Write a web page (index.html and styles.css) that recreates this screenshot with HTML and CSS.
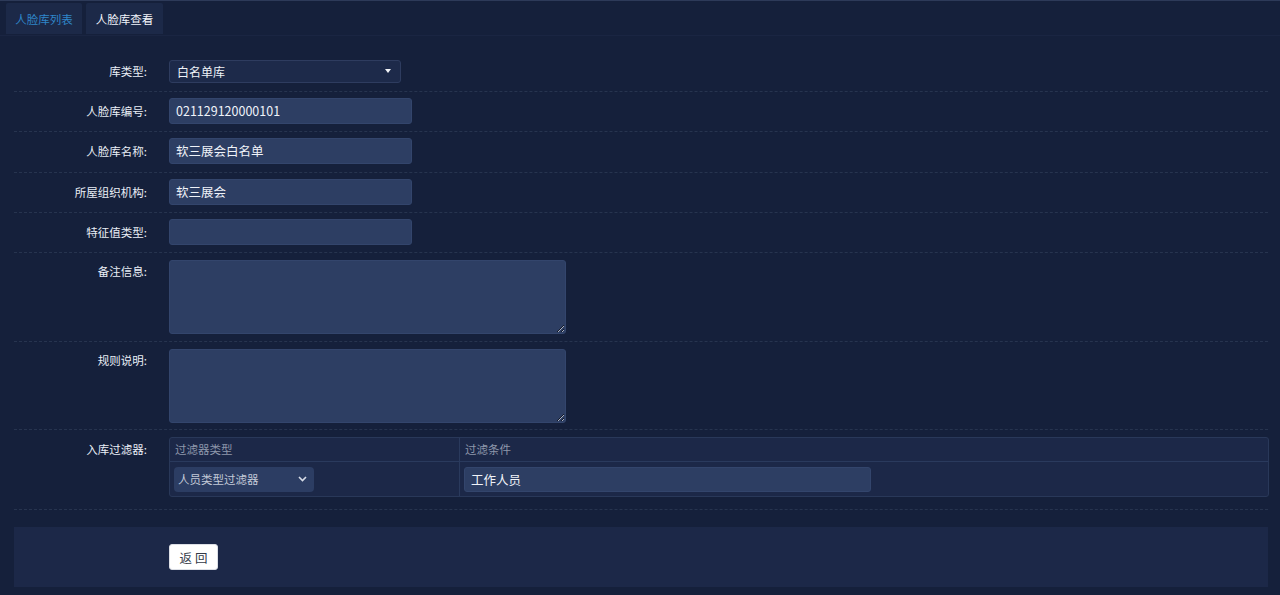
FILE: index.html
```html
<!DOCTYPE html>
<html lang="zh-CN">
<head>
<meta charset="utf-8">
<title>人脸库查看</title>
<link rel="stylesheet" href="styles.css">
</head>
<body>
<div class="page">
  <div class="tabs">
    <div class="tab tab-link">人脸库列表</div>
    <div class="tab tab-active">人脸库查看</div>
  </div>

  <div class="form">
    <div class="row row-first">
      <div class="label">库类型:</div>
      <div class="field">
        <div class="select-top">
          <span>白名单库</span>
          <span class="caret"></span>
        </div>
      </div>
    </div>

    <div class="row">
      <div class="label">人脸库编号:</div>
      <div class="field"><div class="input">021129120000101</div></div>
    </div>

    <div class="row">
      <div class="label">人脸库名称:</div>
      <div class="field"><div class="input">软三展会白名单</div></div>
    </div>

    <div class="row">
      <div class="label">所屋组织机构:</div>
      <div class="field"><div class="input">软三展会</div></div>
    </div>

    <div class="row">
      <div class="label">特征值类型:</div>
      <div class="field"><div class="input"></div></div>
    </div>

    <div class="row row-tall">
      <div class="label label-top">备注信息:</div>
      <div class="field"><textarea class="textarea" readonly></textarea></div>
    </div>

    <div class="row row-tall">
      <div class="label label-top">规则说明:</div>
      <div class="field"><textarea class="textarea" readonly></textarea></div>
    </div>

    <div class="row row-table">
      <div class="label label-table">入库过滤器:</div>
      <div class="field">
        <div class="filter-table">
          <div class="th th-type">过滤器类型</div>
          <div class="th th-cond">过滤条件</div>
          <div class="td td-type">
            <div class="mini-select">
              <span>人员类型过滤器</span>
              <svg class="chev" width="9" height="6" viewBox="0 0 9 6"><polyline points="1,1 4.5,4.5 8,1" fill="none" stroke="#d8dde8" stroke-width="1.6"/></svg>
            </div>
          </div>
          <div class="td td-cond">
            <div class="cond-input">工作人员</div>
          </div>
        </div>
      </div>
    </div>

    <div class="footer">
      <button class="btn">返 回</button>
    </div>
  </div>
</div>
</body>
</html>
```

FILE: styles.css
```css
* { box-sizing: border-box; }

html, body {
  margin: 0;
  padding: 0;
  background: #15203b;
}

body {
  font-family: "Noto Sans CJK SC", "Noto Sans", "Liberation Sans", sans-serif;
  color: #e3e8f2;
  font-size: 12px;
  width: 1280px;
  height: 595px;
  overflow: hidden;
}

.page {
  border-top: 1px solid #2d3a59;
  height: 595px;
}

.tabs {
  display: flex;
  gap: 4px;
  padding: 2px 0 0 6px;
  height: 35px;
  border-bottom: 1px solid #1a2542;
}

.tab {
  width: 77px;
  height: 31px;
  background: #1c2948;
  border-radius: 2px 2px 0 0;
  display: flex;
  align-items: center;
  justify-content: center;
  font-size: 11.5px;
}

.tab-link { color: #2f86c9; width: 76px; }
.tab-active { color: #f1f4fa; }

.form {
  margin: 13px 12px 0 14px;
}

.row {
  display: grid;
  grid-template-columns: 133px 1fr;
  column-gap: 22px;
  align-items: center;
  padding: 6px 0 7.25px;
  border-bottom: 1px dashed #27344f;
}

.row-first { padding: 9px 0 7px; }
.row-tall { padding: 7px 0 6.5px; align-items: start; }
.row-table { padding: 7px 0 12px; align-items: start; }

.label {
  text-align: right;
  font-size: 11.5px;
  color: #e9eef6;
  line-height: 26px;
}

.label-top { line-height: 22px; }
.label-table { line-height: 24px; }

.select-top {
  width: 232px;
  height: 23px;
  background: #1d2a4a;
  border: 1px solid #2e3c5f;
  border-radius: 3px;
  display: flex;
  align-items: center;
  justify-content: space-between;
  padding: 0 8px 0 7px;
  font-size: 12px;
  color: #eef2f8;
}

.caret {
  width: 0;
  height: 0;
  border-left: 3px solid transparent;
  border-right: 3px solid transparent;
  border-top: 4px solid #f2f4f8;
  margin-right: 1px;
}

.input {
  width: 243px;
  height: 26px;
  background: #2d3e63;
  border: 1px solid #33456c;
  border-radius: 3px;
  padding: 0 6px;
  line-height: 24px;
  font-size: 12.5px;
  color: #f0f3f9;
}

.textarea {
  display: block;
  width: 397px;
  height: 74px;
  background: #2d3e63;
  border: 1px solid #33456c;
  border-radius: 3px;
  margin: 0;
  outline: none;
  color: #f0f3f9;
  font-family: inherit;
}

.filter-table {
  display: grid;
  grid-template-columns: 290px 1fr;
  grid-template-rows: 24px 34px;
  width: 1100px;
  background: #1c2848;
  border: 1px solid #293859;
  border-radius: 3px;
}

.th {
  color: #8e97ab;
  font-size: 11.5px;
  padding: 0 5px;
  line-height: 23px;
  border-bottom: 1px solid #2a3a5d;
}

.th-type, .td-type { border-right: 1px solid #2a3a5d; }

.td {
  display: flex;
  align-items: center;
  padding: 0 4px;
}

.mini-select {
  width: 140px;
  height: 25px;
  background: #2c3d63;
  border-radius: 4px;
  display: flex;
  align-items: center;
  justify-content: space-between;
  padding: 0 7px 0 4px;
  font-size: 11.5px;
  color: #c3cad8;
}

.chev { display: block; }

.cond-input {
  width: 407px;
  height: 25px;
  background: #2d3e63;
  border: 1px solid #33456c;
  border-radius: 3px;
  padding: 0 6px;
  line-height: 23px;
  font-size: 12.5px;
  color: #f0f3f9;
}

.footer {
  margin-top: 17px;
  height: 60px;
  background: #1c2848;
  padding: 17px 0 0 155px;
}

.btn {
  display: block;
  width: 49px;
  height: 26px;
  background: #ffffff;
  border: 1px solid #dcdfe6;
  border-radius: 3px;
  font-family: inherit;
  font-size: 12.5px;
  color: #333a48;
  padding: 0;
  cursor: pointer;
}
```
